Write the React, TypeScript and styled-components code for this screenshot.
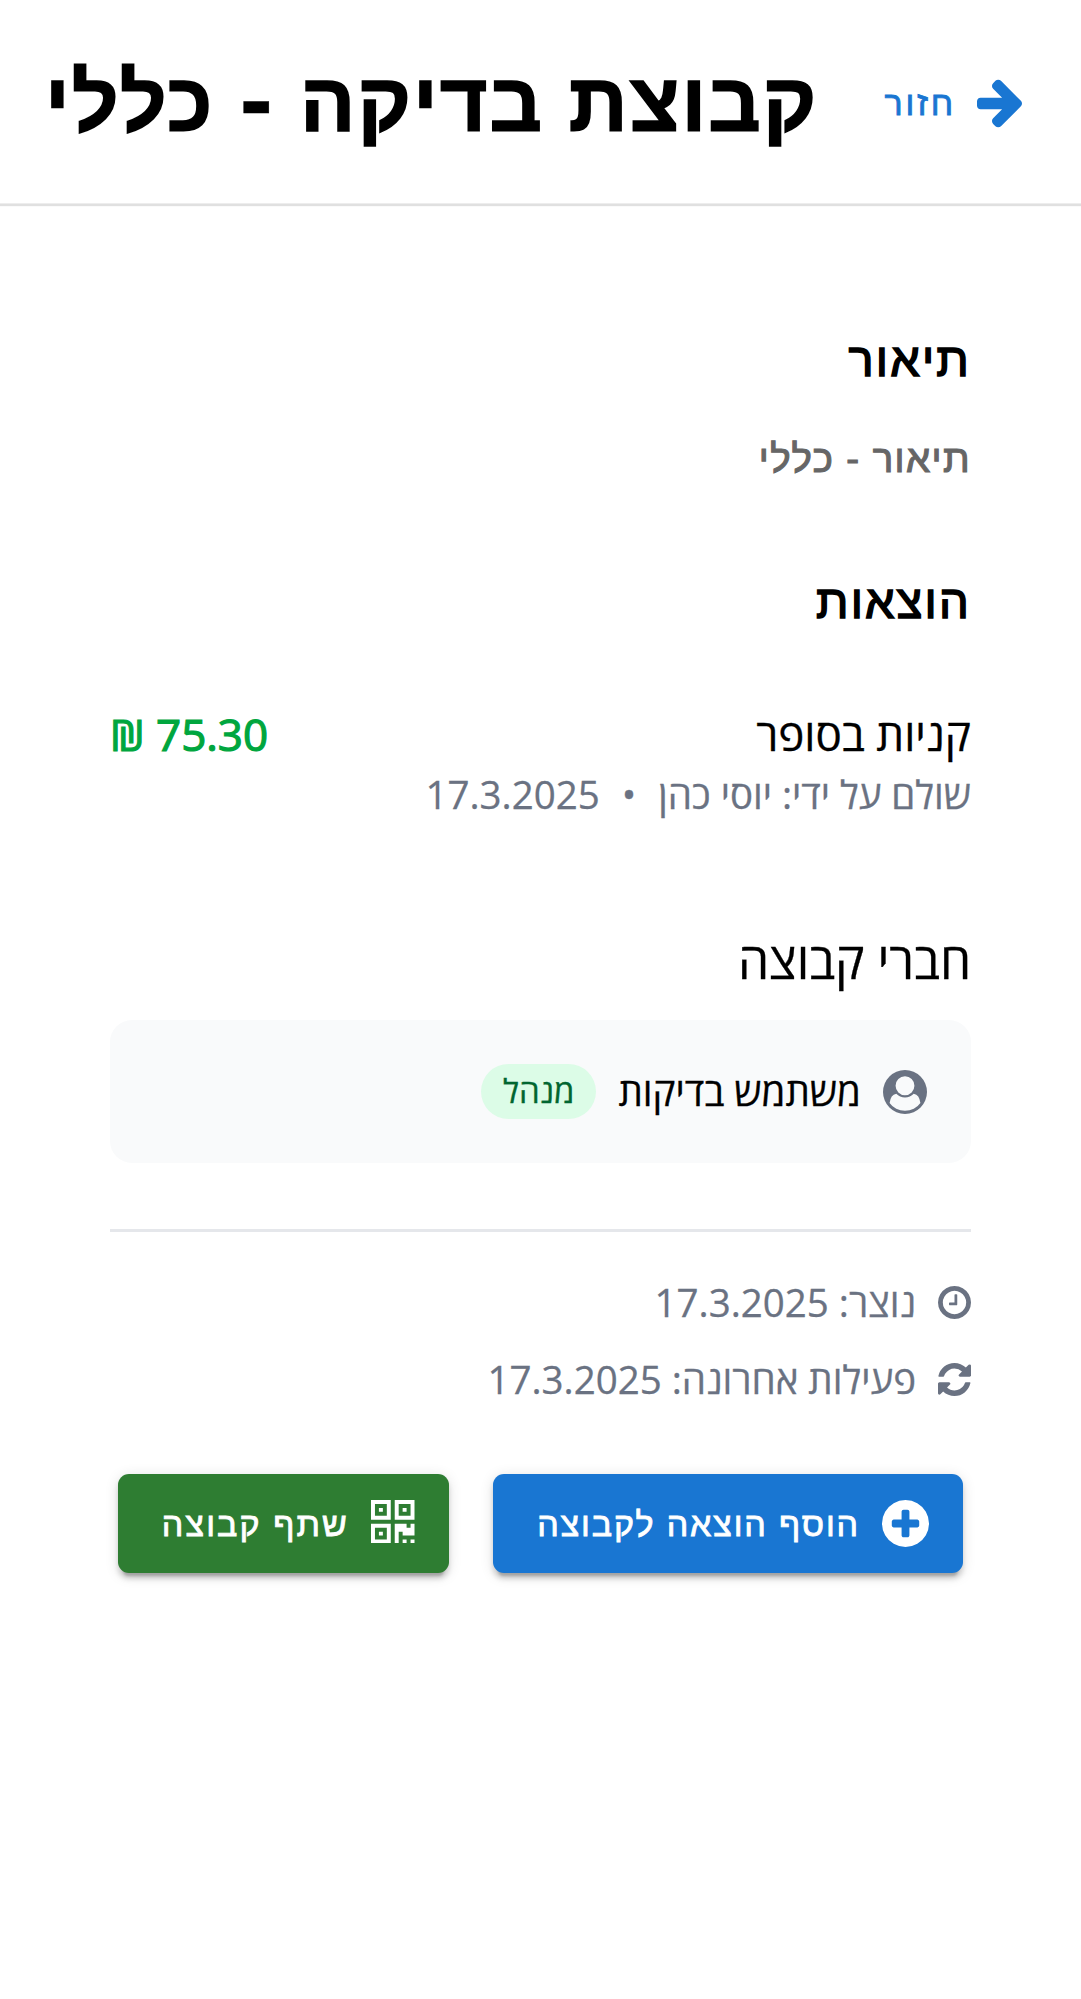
import React from 'react';
import styled, { createGlobalStyle } from 'styled-components';

const UI = `"Liberation Sans", Arial, sans-serif`;
const BODY = `"Open Sans", "Noto Sans", sans-serif`;

const Global = createGlobalStyle`
  *, *::before, *::after { box-sizing: border-box; }
  html, body { margin: 0; background: #fff; }
  body { font-family: ${BODY}; color: #000; -webkit-text-stroke: 0.3px currentColor; }
`;

const Page = styled.div`
  direction: rtl;
  width: 100%;
  min-height: 1999px;
  display: flex;
  flex-direction: column;
  background: #fff;
`;

const Header = styled.header`
  height: 203px;
  display: flex;
  align-items: center;
  justify-content: space-between;
  padding: 3px 59px 0 45px;
`;

const HeaderRule = styled.div`
  height: 4px;
  background: linear-gradient(#ededed 0 1px, #e0e0e0 1px 3px, #fafafa 3px 4px);
`;

const BackButton = styled.button`
  display: inline-flex;
  align-items: center;
  gap: 21px;
  padding: 0;
  border: 0;
  background: none;
  color: #1976d2;
  font: 400 34px/60px ${UI};
  letter-spacing: 2.8px;
  -webkit-text-stroke: 0.8px currentColor;
`;

const Title = styled.h1`
  margin: 0;
  font: 700 82px/110px ${UI};
  letter-spacing: 2px;
  white-space: nowrap;
  -webkit-text-stroke: 1.6px currentColor;
`;

const Dash = styled.span`
  font-family: "DejaVu Sans", sans-serif;
  line-height: 1;
  -webkit-text-stroke: 0.4px currentColor;
`;

const Content = styled.main`
  display: flex;
  flex-direction: column;
  padding: 120px 110px 0;
`;

const Heading = styled.h2`
  margin: 0;
  font: 400 47px/66px ${UI};
  letter-spacing: 2.2px;
  -webkit-text-stroke: 1.5px currentColor;
`;

const Description = styled.p`
  margin: 39px 0 83px;
  font: 400 38.5px/54px ${UI};
  letter-spacing: 1.4px;
  color: #666;
  -webkit-text-stroke: 1.1px currentColor;
`;

const Expense = styled.div`
  display: flex;
  justify-content: space-between;
  margin-top: 66px;
`;

const ExpenseName = styled.div`
  font-size: 44px;
  line-height: 66px;
`;

const ExpenseMeta = styled.div`
  display: flex;
  gap: 22px;
  font-size: 38.5px;
  line-height: 55px;
  color: #6a7282;
`;

const Amount = styled.div`
  direction: ltr;
  font-size: 44px;
  line-height: 66px;
  font-weight: 500;
  color: #00a63e;
  -webkit-text-stroke: 1.2px currentColor;
`;

const MembersTitle = styled.h3`
  margin: 100px 0 21px;
  font-size: 49.5px;
  line-height: 77px;
  font-weight: 400;
`;

const MemberCard = styled.div`
  display: flex;
  align-items: center;
  gap: 22px;
  height: 143px;
  padding: 0 44px;
  border-radius: 22px;
  background: #f9fafb;
`;

const MemberName = styled.span`
  font-size: 38.5px;
  line-height: 55px;
`;

const Badge = styled.span`
  height: 55px;
  padding: 0 22px;
  border-radius: 28px;
  background: #dcfce7;
  color: #016630;
  font-size: 33px;
  line-height: 53px;
`;

const Facts = styled.div`
  display: flex;
  flex-direction: column;
  gap: 22px;
  margin-top: 66px;
  padding-top: 43px;
  border-top: 3px solid #e5e7eb;
`;

const Fact = styled.div`
  display: flex;
  align-items: center;
  gap: 22px;
  font-size: 38.5px;
  line-height: 55px;
  color: #6a7282;
`;

const Actions = styled.div`
  display: flex;
  justify-content: center;
  gap: 44px;
  margin-top: 67px;
`;

const ActionButton = styled.button<{ $bg: string; $width: number; $spacing: number }>`
  display: inline-flex;
  align-items: center;
  gap: 22px;
  width: ${p => p.$width}px;
  height: 99px;
  padding: 0 34px;
  border: 0;
  border-radius: 11px;
  background: ${p => p.$bg};
  color: #fff;
  font: 400 34px/60px ${UI};
  letter-spacing: ${p => p.$spacing}px;
  white-space: nowrap;
  -webkit-text-stroke: 0.8px currentColor;
  box-shadow: 0 8.25px 2.75px -5.5px rgba(0, 0, 0, 0.2), 0 5.5px 5.5px rgba(0, 0, 0, 0.14),
    0 2.75px 13.75px rgba(0, 0, 0, 0.12);
`;

const Glyph = styled.svg<{ $color?: string; $lift?: number }>`
  flex: none;
  display: block;
  margin-bottom: ${p => p.$lift || 0}px;
  fill: ${p => p.$color || 'currentColor'};
  stroke: none;
`;

type IconProps = { box: string; w: number; h: number; d: string; color?: string; lift?: number };
const Icon = ({ box, w, h, d, color, lift }: IconProps) => (
  <Glyph viewBox={box} width={w} height={h} $color={color} $lift={lift} aria-hidden="true">
    <path d={d} />
  </Glyph>
);

const ARROW =
  'M1600 960q0 54-37 91l-651 651q-39 37-91 37-51 0-90-37l-75-75q-38-38-38-91t38-91l293-293h-704q-52 0-84.5-37.5t-32.5-90.5v-128q0-53 32.5-90.5t84.5-37.5h704l-293-294q-38-36-38-90t38-90l75-75q38-38 90-38 53 0 91 38l651 651q37 35 37 90z';
const CLOCK =
  'M1024 544v448q0 14-9 23t-23 9h-320q-14 0-23-9t-9-23v-64q0-14 9-23t23-9h224v-352q0-14 9-23t23-9h64q14 0 23 9t9 23zm416 352q0-148-73-273t-198-198-273-73-273 73-198 198-73 273 73 273 198 198 273 73 273-73 198-198 73-273zm224 0q0 209-103 385.5t-279.5 279.5-385.5 103-385.5-103-279.5-279.5-103-385.5 103-385.5 279.5-279.5 385.5-103 385.5 103 279.5 279.5 103 385.5z';
const REFRESH =
  'M1639 1056q0 5-1 7-64 268-268 434.5t-478 166.5q-146 0-282.5-55t-243.5-157l-129 129q-19 19-45 19t-45-19-19-45v-448q0-26 19-45t45-19h448q26 0 45 19t19 45-19 45l-137 137q71 66 161 102t187 36q134 0 250-65t186-179q11-17 53-117 8-23 30-23h192q13 0 22.5 9.5t9.5 22.5zm25-800v448q0 26-19 45t-45 19h-448q-26 0-45-19t-19-45 19-45l138-138q-148-137-349-137-134 0-250 65t-186 179q-11 17-53 117-8 23-30 23h-199q-13 0-22.5-9.5t-9.5-22.5v-7q65-268 270-434.5t480-166.5q146 0 284 55.5t245 156.5l130-129q19-19 45-19t45 19 19 45z';
const PLUS =
  'M1344 960v-128q0-26-19-45t-45-19h-256v-256q0-26-19-45t-45-19h-128q-26 0-45 19t-19 45v256h-256q-26 0-45 19t-19 45v128q0 26 19 45t45 19h256v256q0 26 19 45t45 19h128q26 0 45-19t19-45v-256h256q26 0 45-19t19-45zm320-64q0 209-103 385.5t-279.5 279.5-385.5 103-385.5-103-279.5-279.5-103-385.5 103-385.5 279.5-279.5 385.5-103 385.5 103 279.5 279.5 103 385.5z';
const QR =
  'M576 1152v128h-128v-128h128zm0-768v128h-128v-128h128zm768 0v128h-128v-128h128zm-1024 1023h384v-383h-384v383zm0-767h384v-384h-384v384zm768 0h384v-384h-384v384zm-256 256v640h-640v-640h640zm512 512v128h-128v-128h128zm256 0v128h-128v-128h128zm0-512v384h-384v-128h-128v384h-128v-640h384v128h128v-128h128zm-768-768v640h-640v-640h640zm768 0v640h-640v-640h640z';
const USER =
  'M1523 1339q-22-155-87.5-257.5t-184.5-118.5q-67 74-159.5 115.5t-195.5 41.5-195.5-41.5-159.5-115.5q-119 16-184.5 118.5t-87.5 257.5q106 150 271 237.5t356 87.5 356-87.5 271-237.5zm-243-699q0-159-112.5-271.5t-271.5-112.5-271.5 112.5-112.5 271.5 112.5 271.5 271.5 112.5 271.5-112.5 112.5-271.5zm512 256q0 182-71 347.5t-190.5 286-285.5 191.5-349 71q-182 0-348-71t-286-191-191-286-71-348 71-348 191-286 286-191 348-71 348 71 286 191 191 286 71 348z';

export default function App() {
  return (
    <Page dir="rtl">
      <Global />
      <Header>
        <BackButton>
          <Icon box="128 128 1472 1664" w={45} h={51} d={ARROW} />
          <span>חזור</span>
        </BackButton>
        <Title>
          קבוצת בדיקה <Dash>-</Dash> כללי
        </Title>
      </Header>
      <HeaderRule />
      <Content>
        <Heading>תיאור</Heading>
        <Description>תיאור - כללי</Description>
        <Heading>הוצאות</Heading>
        <Expense>
          <div>
            <ExpenseName>קניות בסופר</ExpenseName>
            <ExpenseMeta>
              <span>שולם על ידי: יוסי כהן</span>
              <span>•</span>
              <span>17.3.2025</span>
            </ExpenseMeta>
          </div>
          <Amount>₪ 75.30</Amount>
        </Expense>
        <MembersTitle>חברי קבוצה</MembersTitle>
        <MemberCard>
          <Icon box="0 0 1792 1792" w={44} h={44} d={USER} color="#6a7282" />
          <MemberName>משתמש בדיקות</MemberName>
          <Badge>מנהל</Badge>
        </MemberCard>
        <Facts>
          <Fact>
            <Icon box="128 128 1536 1536" w={33} h={33} d={CLOCK} />
            <span>נוצר: 17.3.2025</span>
          </Fact>
          <Fact>
            <Icon box="128 128 1536 1536" w={33} h={33} d={REFRESH} />
            <span>פעילות אחרונה: 17.3.2025</span>
          </Fact>
        </Facts>
        <Actions>
          <ActionButton $bg="#1976d2" $width={470.5} $spacing={1.85}>
            <Icon box="128 128 1536 1536" w={47} h={47} d={PLUS} />
            <span>הוסף הוצאה לקבוצה</span>
          </ActionButton>
          <ActionButton $bg="#2e7d32" $width={330.5} $spacing={2.1}>
            <Icon box="192 128 1408 1408" w={43.5} h={43.5} d={QR} lift={4} />
            <span>שתף קבוצה</span>
          </ActionButton>
        </Actions>
      </Content>
    </Page>
  );
}
